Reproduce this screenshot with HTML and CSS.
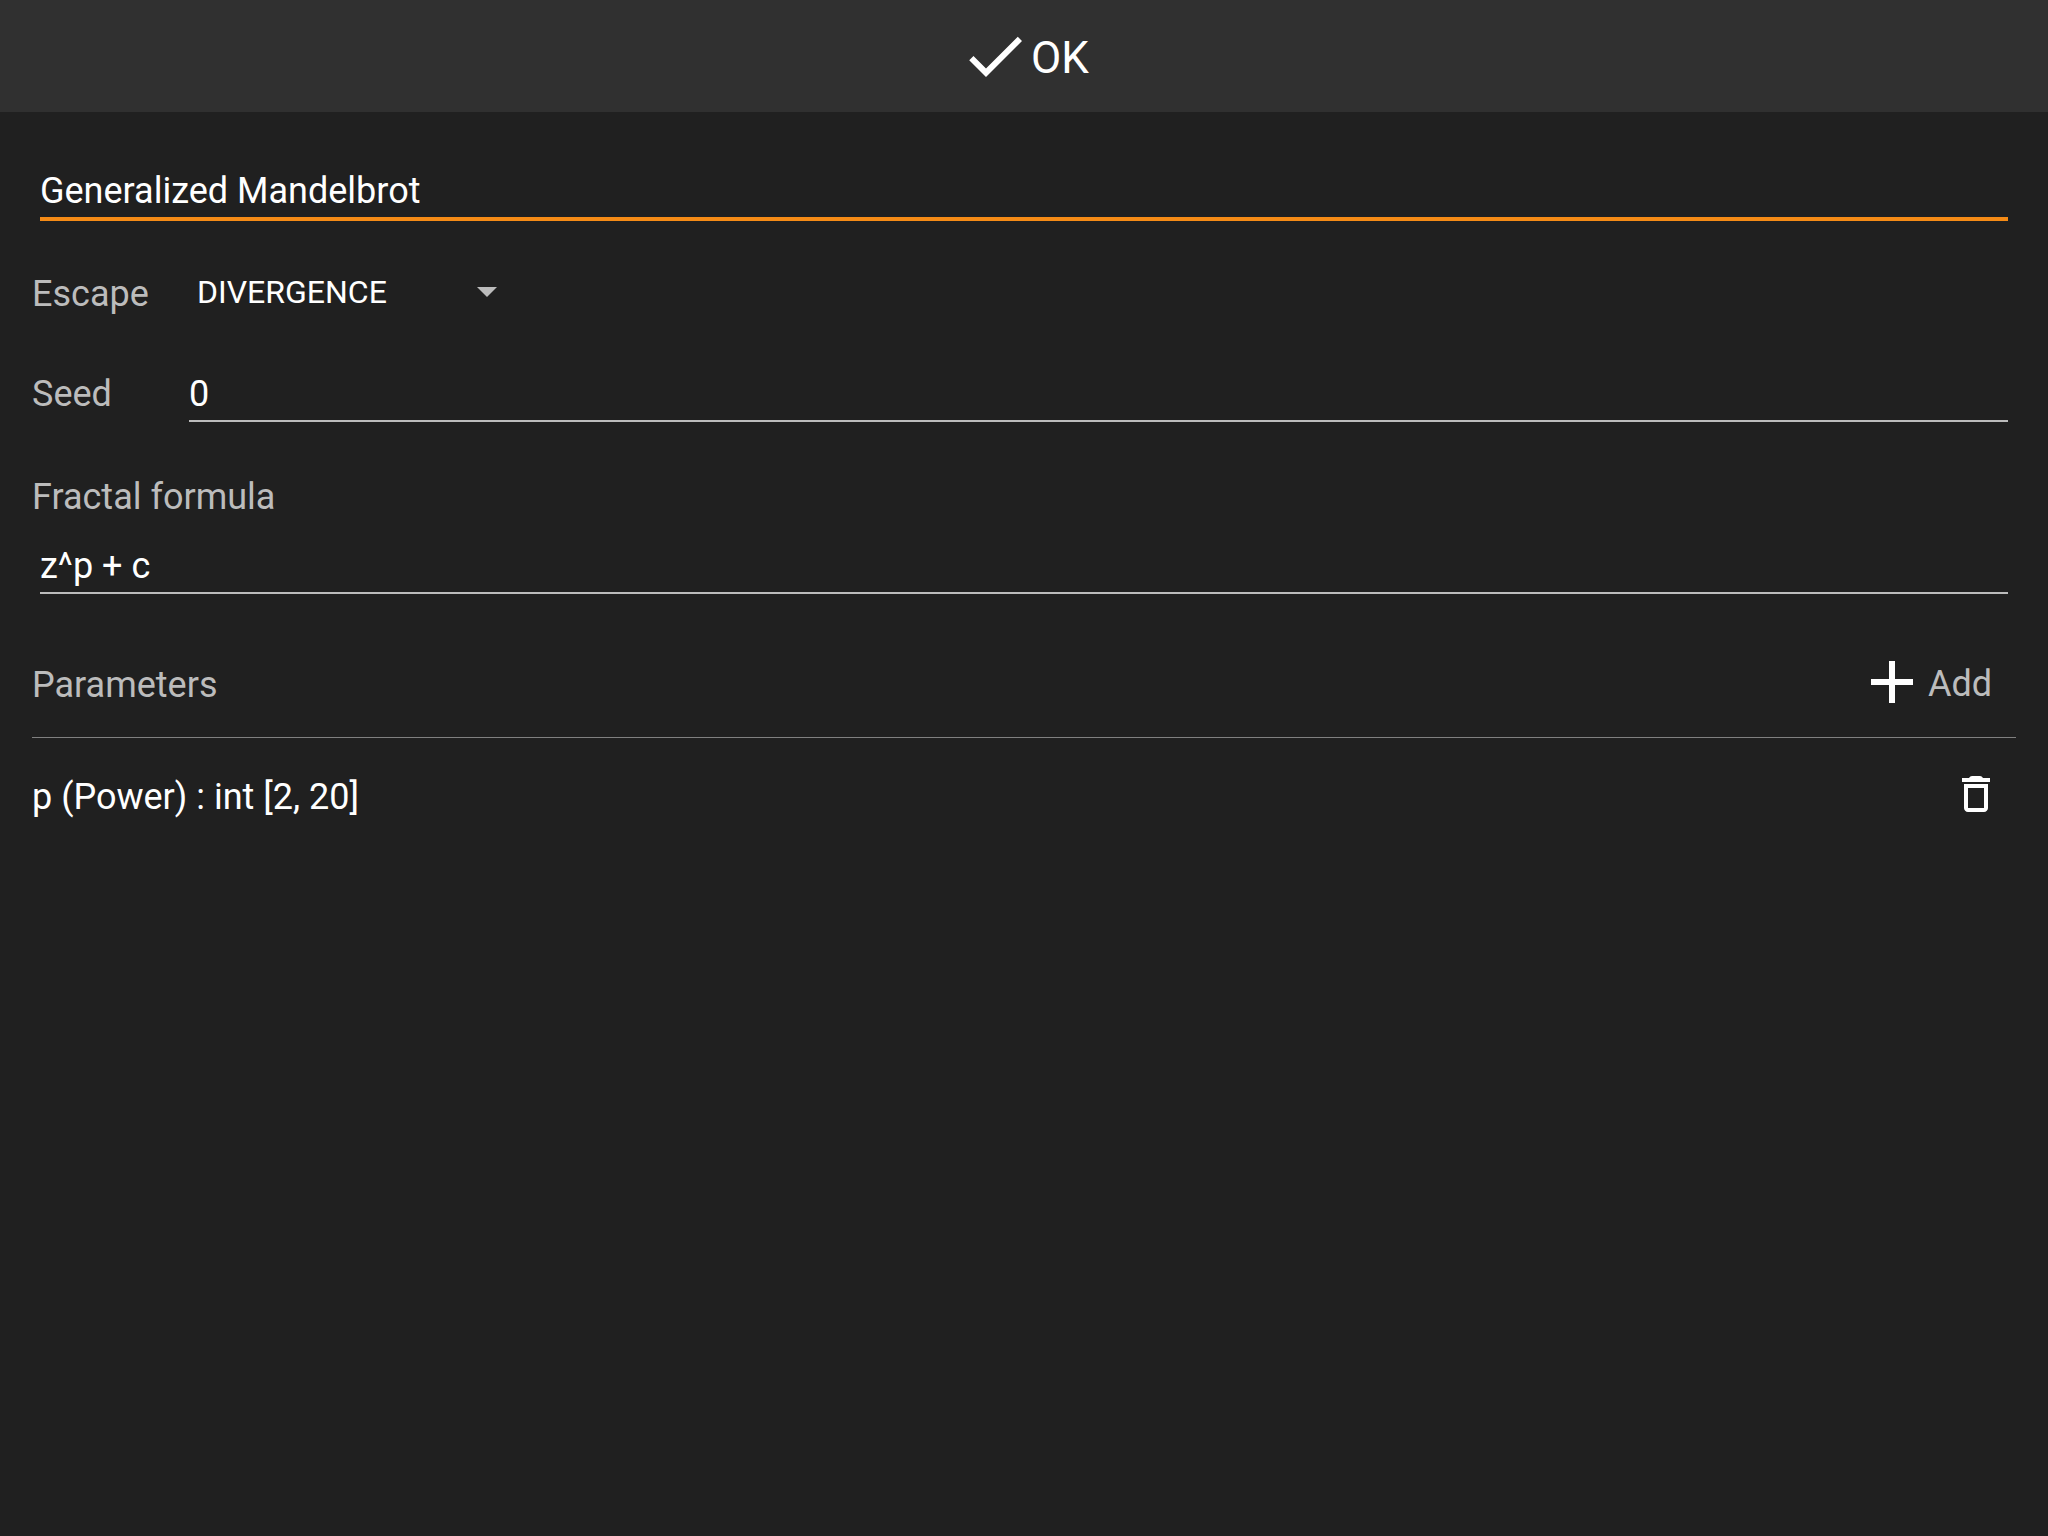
FILE: index.html
```html
<!DOCTYPE html>
<html lang="en">
<head>
<meta charset="UTF-8">
<meta name="viewport" content="width=device-width, initial-scale=1.0">
<title>Generalized Mandelbrot</title>

<link rel="stylesheet" href="styles.css">
</head>
<body>

    <header class="toolbar">
        <button class="ok" type="submit" form="fractal">
            <svg class="icon-large" viewBox="0 0 24 24"><path d="M9 16.17L4.83 12l-1.42 1.41L9 19 21 7l-1.41-1.41z"/></svg>
            <span class="ok-text">OK</span>
        </button>
    </header>

    <form id="fractal" class="editor">
        <input class="field title" type="text" aria-label="Name" value="Generalized Mandelbrot">

        <div class="row escape">
            <label class="label" for="escape">Escape</label>
            <div class="dropdown">
                <select id="escape">
                    <option>DIVERGENCE</option>
                </select>
            </div>
        </div>

        <div class="row seed">
            <label class="label" for="seed">Seed</label>
            <input id="seed" class="field" type="text" value="0">
        </div>

        <label class="label formula-label" for="formula">Fractal formula</label>
        <input id="formula" class="field formula" type="text" value="z^p + c">

        <div class="params-head">
            <h2 class="label">Parameters</h2>
            <button class="add" type="button">
                <svg class="icon-large" viewBox="0 0 24 24"><path d="M19 13h-6v6h-2v-6H5v-2h6V5h2v6h6z"/></svg>
                <span class="label">Add</span>
            </button>
        </div>

        <ul class="params">
            <li class="param">
                <span class="param-name">p (Power) : int [2, 20]</span>
                <button class="delete" type="button" aria-label="Delete">
                    <svg class="icon" viewBox="0 0 24 24"><path d="M18 7H6v12c0 1.1.9 2 2 2h8c1.1 0 2-.9 2-2V7zM8 9h8v10H8V9z" fill-rule="evenodd"/><path d="M15.5 4c-.4-.6-.9-1-1.5-1h-4c-.6 0-1.1.4-1.5 1H5v2h14V4z"/></svg>
                </button>
            </li>
        </ul>
    </form>

</body>
</html>
```
FILE: styles.css
```css
* {
    box-sizing: border-box;
}
body {
    background-color: #202020;
    color: white;
    margin: 0;
    font-family: Roboto, sans-serif;
    font-size: 36px;
    line-height: 44px;
}
button, input, select {
    background: none;
    border: none;
    border-radius: 0;
    color: white;
    font: inherit;
    margin: 0;
    padding: 0;
    outline: none;
}
button {
    display: flex;
    align-items: center;
    cursor: pointer;
}
svg {
    display: block;
    fill: white;
}
.icon {
    width: 48px;
    height: 48px;
}
.icon-large {
    width: 72px;
    height: 72px;
}
.toolbar {
    background-color: #303030;
    display: flex;
    justify-content: center;
    padding: 20px;
}
.ok {
    font-size: 44px;
}
.editor {
    padding: 57px 32px;
}
.field {
    display: block;
    width: 100%;
    height: 50px;
    padding-bottom: 4px;
    border-bottom: 2px solid #bcbcbc;
}
.title, .formula {
    width: calc(100% - 16px);
    margin: 0 8px;
}
.title {
    height: 52px;
    border-bottom: 4px solid #f58b16;
}
.label {
    color: #bcbcbc;
    font-size: 36px;
    font-weight: normal;
    margin: 0;
}
.row {
    display: grid;
    grid-template-columns: 157px 1fr;
    padding-right: 8px;
}
.escape {
    margin-top: 47px;
    align-items: center;
}
.ok-text, .escape .label, .add .label {
    padding-top: 4px;
}
h2.label, .param-name {
    padding-top: 6px;
}
.dropdown {
    width: 320px;
    display: flex;
    align-items: center;
}
.dropdown select {
    appearance: none;
    flex: 1;
    height: 44px;
    padding-left: 8px;
    font-size: 32px;
}
.dropdown::after {
    content: "";
    margin-right: 12px;
    border: 10px solid transparent;
    border-top-color: #bcbcbc;
    border-bottom: none;
}
.seed {
    margin-top: 56px;
}
.formula-label {
    display: block;
    margin-top: 53px;
}
.formula {
    margin-top: 25px;
}
.params-head {
    display: flex;
    justify-content: space-between;
    align-items: center;
    margin-top: 52px;
    padding-bottom: 19px;
    border-bottom: 1px solid #808080;
}
.add {
    padding-right: 24px;
}
.params {
    list-style: none;
    margin: 0;
    padding: 0;
}
.param {
    display: flex;
    justify-content: space-between;
    align-items: center;
    padding: 31px 16px 31px 0;
}
```
